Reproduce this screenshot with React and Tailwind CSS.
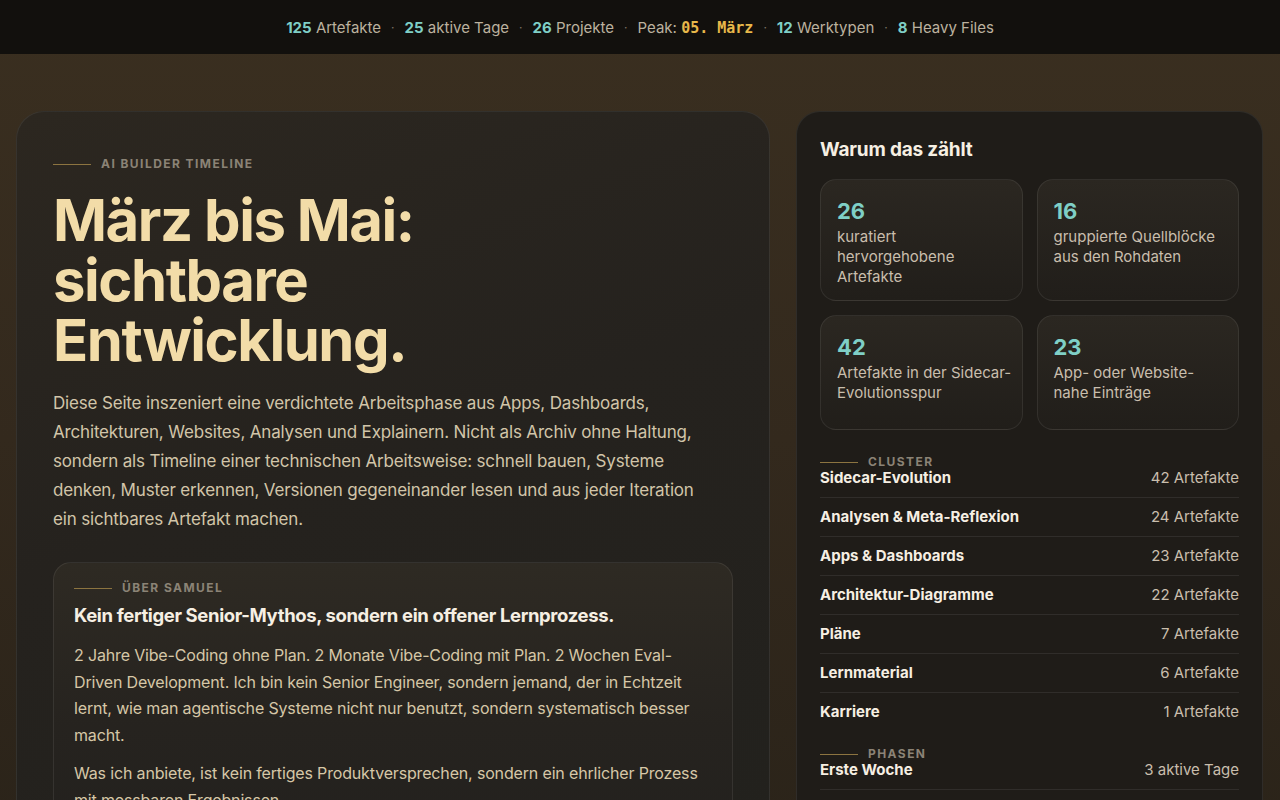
import React from 'react';

const stats = [
  { value: '26', label: 'kuratiert hervorgehobene Artefakte' },
  { value: '16', label: 'gruppierte Quellblöcke aus den Rohdaten' },
  { value: '42', label: 'Artefakte in der Sidecar-Evolutionsspur' },
  { value: '23', label: 'App- oder Website-nahe Einträge' },
];

const clusters = [
  ['Sidecar-Evolution', '42 Artefakte'],
  ['Analysen & Meta-Reflexion', '24 Artefakte'],
  ['Apps & Dashboards', '23 Artefakte'],
  ['Architektur-Diagramme', '22 Artefakte'],
  ['Pläne', '7 Artefakte'],
  ['Lernmaterial', '6 Artefakte'],
  ['Karriere', '1 Artefakte'],
];

function Eyebrow({ children }) {
  return (
    <div className="flex items-center gap-[10px]">
      <span className="h-px w-[38px] bg-[#8c7440]" />
      <span className="text-[12px] font-bold uppercase tracking-[0.12em] text-[#8b8376] leading-none">
        {children}
      </span>
    </div>
  );
}

function Dot() {
  return <span className="mx-[10px] text-[#7d7568] text-[12px]">·</span>;
}

export default function App() {
  return (
    <div
      className="min-h-screen bg-[linear-gradient(180deg,#3a2f20_0%,#33291d_50%,#2a2319_100%)] text-[#d8ccb4]"
      style={{ fontFamily: 'Inter, "Noto Sans", sans-serif' }}
    >
      {/* Top bar */}
      <div className="flex h-[54px] items-center justify-center bg-[#12100d] pt-[2px] text-[15px] text-[#bcb29f]">
        <span><b className="font-bold text-[#7fcfc6]">125</b> Artefakte</span>
        <Dot />
        <span><b className="font-bold text-[#7fcfc6]">25</b> aktive Tage</span>
        <Dot />
        <span><b className="font-bold text-[#7fcfc6]">26</b> Projekte</span>
        <Dot />
        <span>
          Peak:{' '}
          <b className="font-bold text-[#e8b84a]" style={{ fontFamily: '"DejaVu Sans Mono", monospace' }}>
            05. März
          </b>
        </span>
        <Dot />
        <span><b className="font-bold text-[#7fcfc6]">12</b> Werktypen</span>
        <Dot />
        <span><b className="font-bold text-[#7fcfc6]">8</b> Heavy Files</span>
      </div>

      <div className="flex gap-[26px] px-[16px] pt-[57px]">
        {/* Left card */}
        <section className="w-[754px] shrink-0 rounded-t-[28px] border border-b-0 border-white/[0.07] bg-[linear-gradient(160deg,#2c2720_0%,#25221e_45%,#22211d_100%)] px-[36px] pt-[46px] pb-10">
          <Eyebrow>AI Builder Timeline</Eyebrow>
          <h1 className="mt-[20px] text-[58px] font-bold leading-[60px] tracking-[-0.025em] text-[#f2dca8]">
            März bis Mai:
            <br />
            sichtbare
            <br />
            Entwicklung.
          </h1>
          <p className="mt-[19px] max-w-[656px] text-[17px] leading-[29px] text-[#d2c5a9] tracking-[-0.01em]">
            Diese Seite inszeniert eine verdichtete Arbeitsphase aus Apps, Dashboards, Architekturen,
            Websites, Analysen und Explainern. Nicht als Archiv ohne Haltung, sondern als Timeline einer
            technischen Arbeitsweise: schnell bauen, Systeme denken, Muster erkennen, Versionen
            gegeneinander lesen und aus jeder Iteration ein sichtbares Artefakt machen.
          </p>

          <div className="mt-[28px] rounded-[18px] border border-white/[0.08] bg-[linear-gradient(180deg,#2e2a23_0%,#26231f_60%,#23211e_100%)] px-[20px] pt-[19px] pb-6">
            <Eyebrow>Über Samuel</Eyebrow>
            <h2 className="mt-[8px] text-[18.5px] font-bold leading-[26px] tracking-[-0.02em] text-[#f6efe3]">
              Kein fertiger Senior-Mythos, sondern ein offener Lernprozess.
            </h2>
            <p className="mt-[14px] text-[16px] leading-[26.5px] text-[#d6c7a7] tracking-[-0.01em]">
              2 Jahre Vibe-Coding ohne Plan. 2 Monate Vibe-Coding mit Plan. 2 Wochen Eval-Driven
              Development. Ich bin kein Senior Engineer, sondern jemand, der in Echtzeit lernt, wie man
              agentische Systeme nicht nur benutzt, sondern systematisch besser macht.
            </p>
            <p className="mt-[12px] text-[16px] leading-[26.5px] text-[#d6c7a7] tracking-[-0.01em]">
              Was ich anbiete, ist kein fertiges Produktversprechen, sondern ein ehrlicher Prozess mit
              messbaren Ergebnissen.
            </p>
          </div>
        </section>

        {/* Right card */}
        <aside className="w-[467px] shrink-0 rounded-t-[24px] border border-b-0 border-white/[0.07] bg-[#1f1c18] px-[23px] pt-[26px] pb-6">
          <h3 className="text-[19px] font-bold leading-[24px] tracking-[-0.01em] text-[#f6efe3]">
            Warum das zählt
          </h3>
          <div className="mt-[17px] grid grid-cols-2 gap-[14px]">
            {stats.map((s) => (
              <div
                key={s.value}
                className={
                  'rounded-[16px] border border-white/[0.08] bg-[linear-gradient(180deg,#2b2721_0%,#211e1a_100%)] pl-[16px] pr-[10px] pt-[17px] ' +
                  (s.value === '26' || s.value === '16' ? 'h-[122px]' : 'h-[115px]')
                }
              >
                <div className="text-[22px] font-bold leading-[28px] text-[#7fcfc6]">{s.value}</div>
                <div className="mt-[2px] text-[15px] leading-[20px] text-[#c9bead]">{s.label}</div>
              </div>
            ))}
          </div>

          <div className="mt-[26px]">
            <Eyebrow>Cluster</Eyebrow>
            <ul className="mt-[2px]">
              {clusters.map(([name, count], i) => (
                <li
                  key={name}
                  className={
                    'flex items-center justify-between text-[15px] ' +
                    (i === 0 ? 'pb-[11px]' : 'py-[11px]') +
                    (i < clusters.length - 1 ? ' border-b border-white/[0.08]' : '')
                  }
                >
                  <span className="font-bold text-[#f6efe3] leading-[16px]">{name}</span>
                  <span className="text-[#c9bead] leading-[16px]">{count}</span>
                </li>
              ))}
            </ul>
          </div>

          <div className="mt-[17px]">
            <Eyebrow>Phasen</Eyebrow>
            <ul className="mt-[2px]">
              <li className="flex items-center justify-between border-b border-white/[0.08] pb-[11px] text-[15px]">
                <span className="font-bold text-[#f6efe3] leading-[16px]">Erste Woche</span>
                <span className="text-[#c9bead] leading-[16px]">3 aktive Tage</span>
              </li>
              <li className="flex items-center justify-between py-[11px] text-[15px]">
                <span className="font-bold text-[#f6efe3] leading-[16px]">Zweite Woche</span>
                <span className="text-[#c9bead] leading-[16px]">5 aktive Tage</span>
              </li>
            </ul>
          </div>
        </aside>
      </div>
    </div>
  );
}
